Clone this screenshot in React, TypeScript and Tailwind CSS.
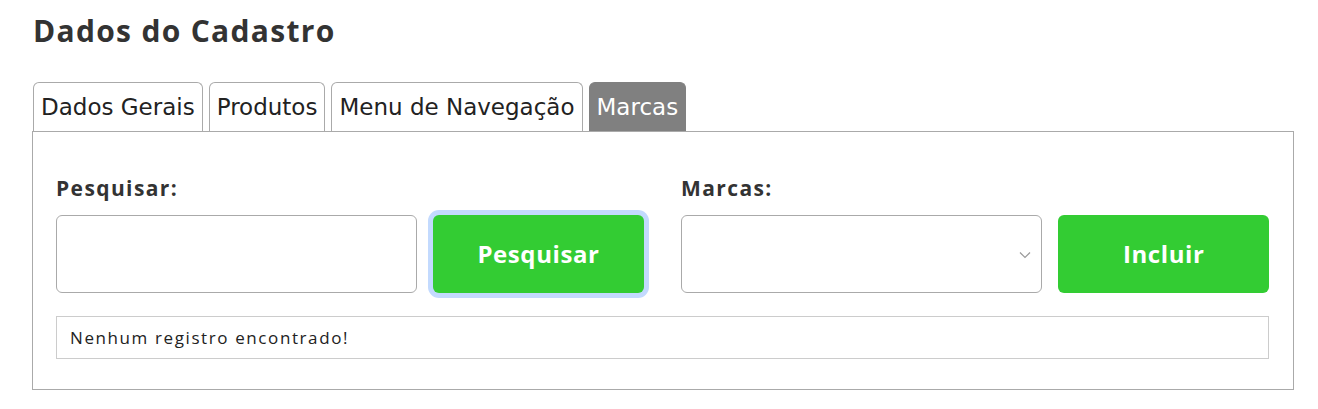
import React from 'react';

const tabs = ['Dados Gerais', 'Produtos', 'Menu de Navegação', 'Marcas'];

const App: React.FC = () => {
  return (
    <div className="bg-white min-h-[409px] px-[32px] pt-[12px] font-['Open_Sans',sans-serif] text-[#333]">
      <h1 className="text-[30px] font-bold leading-[38px] tracking-[1.3px] text-[#333] pl-[1px]">Dados do Cadastro</h1>

      {/* Tabs */}
      <div className="flex gap-[6px] mt-[32px] pl-[1px]">
        {tabs.map((t, i) => (
          <div
            key={t}
            className={
              i === 3
                ? "h-[49px] px-[7px] flex items-center rounded-t-[6px] border border-b-0 border-[#808080] bg-[#808080] text-white text-[23px] font-['DejaVu_Sans',sans-serif]"
                : "h-[49px] px-[7px] flex items-center rounded-t-[6px] border border-b-0 border-[#aaa] bg-white text-[#222] text-[23px] font-['DejaVu_Sans',sans-serif]"
            }
          >
            {t}
          </div>
        ))}
      </div>

      {/* Panel */}
      <div className="w-[1262px] h-[259px] border border-[#aaa] px-[23px] pt-[43px]">
        <div className="flex gap-[37px]">
          {/* Pesquisar */}
          <div className="w-[588px]">
            <label className="block text-[21px] font-bold leading-[26px] tracking-[1.4px] text-[#333] mb-[14px]">Pesquisar:</label>
            <div className="flex gap-[16px]">
              <input
                type="text"
                className="w-[361px] h-[78px] border border-[#aaa] rounded-[6px] outline-none px-3"
              />
              <button className="w-[211px] h-[78px] bg-[#33cc33] text-white text-[24px] font-bold tracking-[0.6px] rounded-[6px] ring-[5px] ring-[#c3dafe]">
                Pesquisar
              </button>
            </div>
          </div>

          {/* Marcas */}
          <div className="w-[588px]">
            <label className="block text-[21px] font-bold leading-[26px] tracking-[1.4px] text-[#333] mb-[14px]">Marcas:</label>
            <div className="flex gap-[16px]">
              <div className="relative w-[362px] h-[78px] border border-[#aaa] rounded-[6px] bg-white">
                <svg
                  className="absolute right-[10px] top-[35px]"
                  width="12"
                  height="8"
                  viewBox="0 0 12 8"
                  fill="none"
                  stroke="#999"
                  strokeWidth="1.2"
                >
                  <path d="M1 1.5l5 5 5-5" />
                </svg>
              </div>
              <button className="w-[211px] h-[78px] bg-[#33cc33] text-white text-[24px] font-bold tracking-[0.6px] rounded-[6px]">
                Incluir
              </button>
            </div>
          </div>
        </div>

        <div className="mt-[23px] w-[1213px] h-[43px] border border-[#ccc] flex items-center px-[13px] text-[17px] tracking-[1.6px] text-[#222]">
          Nenhum registro encontrado!
        </div>
      </div>
    </div>
  );
};

export default App;
